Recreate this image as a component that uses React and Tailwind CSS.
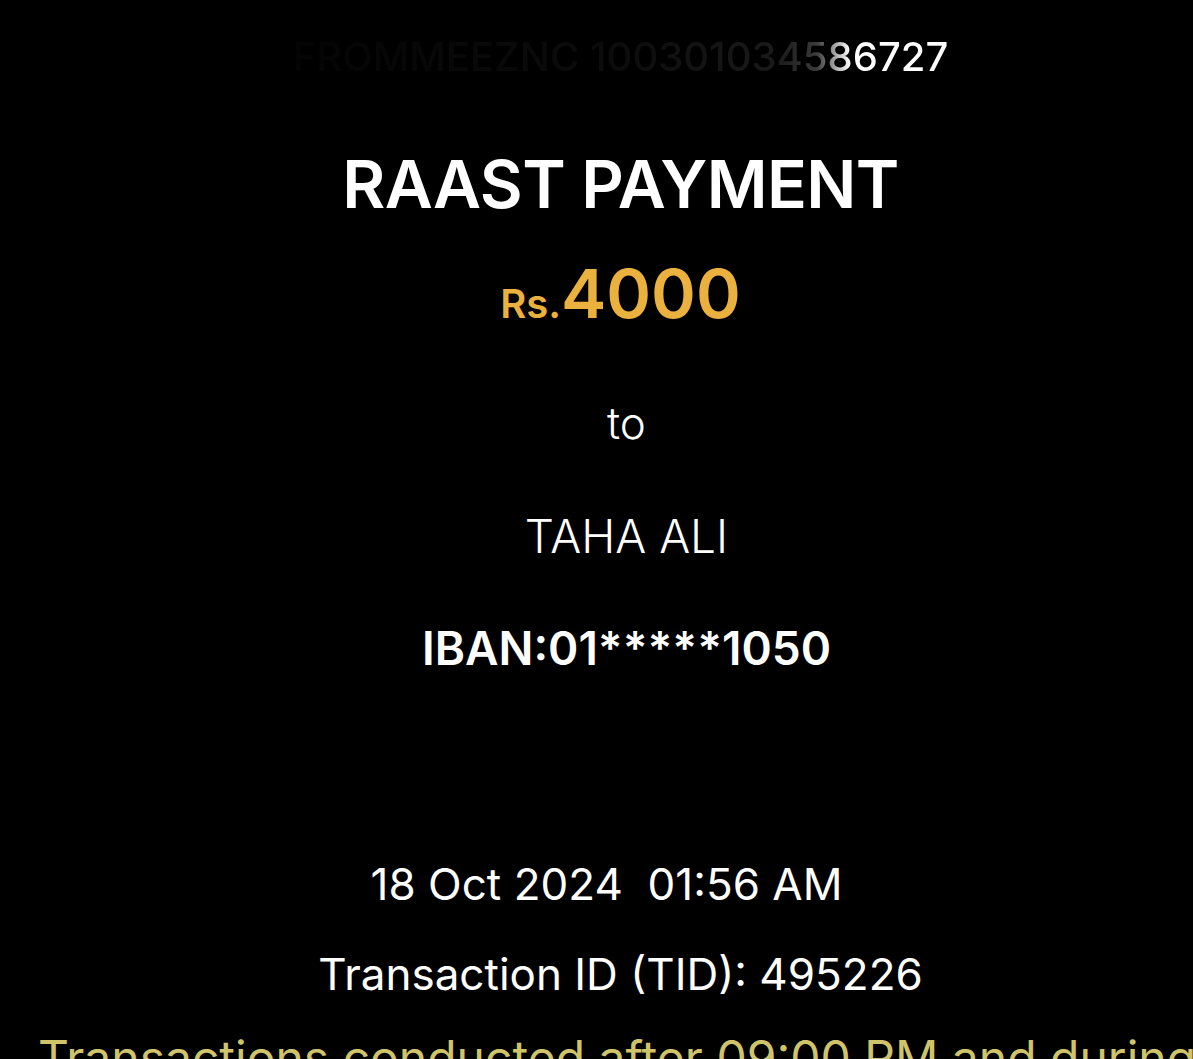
export default function App() {
  return (
    <div
      className="h-[1059px] w-full overflow-hidden bg-black text-white"
      style={{ fontFamily: "Inter, 'Noto Sans', sans-serif" }}
    >
      <div className="flex flex-col items-center pl-12">
        <div className="mt-[37px] inline-block whitespace-nowrap bg-[linear-gradient(to_right,#040404_0%,#0c0c0c_50%,#1a1a1a_74%,#3a3a3a_80%,#ffffff_85%)] bg-clip-text text-[40px] font-medium leading-none text-transparent">
          FROMMEEZNC 100301034586727
        </div>
        <div className="mt-[74px] whitespace-nowrap text-[66px] font-semibold leading-none tracking-[-0.6px]">
          RAAST PAYMENT
        </div>
        <div className="mt-[42px] flex items-baseline whitespace-nowrap leading-none text-[#ebb13f]">
          <span className="text-[40px] font-semibold">Rs.</span>
          <span className="text-[68px] font-semibold">4000</span>
        </div>
        <div className="ml-[12px] mt-[74px] text-[44px] font-light leading-none">to</div>
        <div className="ml-[12px] mt-[68px] whitespace-nowrap text-[46px] font-light leading-none">
          TAHA ALI
        </div>
        <div className="ml-[12px] mt-[66px] whitespace-nowrap text-[46px] font-semibold leading-none">
          IBAN:01*****1050
        </div>
        <div className="mr-[28px] mt-[191px] whitespace-pre text-[44px] font-normal leading-none">
          18 Oct 2024  01:56 AM
        </div>
        <div className="mt-[46px] whitespace-nowrap text-[44px] font-normal leading-none">
          Transaction ID (TID): 495226
        </div>
      </div>
      <div className="mt-[38px] whitespace-nowrap pl-[38px] text-[48px] font-normal leading-none text-[#d0c46b]">
        Transactions conducted after 09:00 PM and during
      </div>
    </div>
  );
}
